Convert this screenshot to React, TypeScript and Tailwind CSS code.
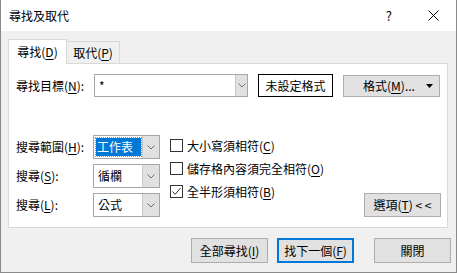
import React from 'react';

const font = "font-['Noto_Sans_CJK_TC','Microsoft_JhengHei',sans-serif]";

function Chevron() {
  return (
    <svg width="8" height="5" viewBox="0 0 8 5" className="block">
      <path d="M0.5 0.5 L4 4 L7.5 0.5" fill="none" stroke="#6d6d6d" strokeWidth="1" />
    </svg>
  );
}

function U({ children }: { children: React.ReactNode }) {
  return <span className="underline underline-offset-[2px] decoration-[1px]">{children}</span>;
}

function Combo({ children }: { children: React.ReactNode }) {
  return (
    <div className="flex w-[67px] h-[24px] border border-[#a6a6a6] bg-white">
      <div className="flex-1 flex items-center pl-[2px]">{children}</div>
      <div className="w-[17px] flex items-center justify-center bg-[#e1e1e1] border-l border-[#c8c8c8]">
        <Chevron />
      </div>
    </div>
  );
}

function Check({ checked, children }: { checked?: boolean; children: React.ReactNode }) {
  return (
    <div className="flex items-center h-[13px]">
      <div className="w-[13px] h-[13px] border border-[#333333] bg-white flex items-center justify-center">
        {checked && (
          <svg width="11" height="11" viewBox="0 0 11 11">
            <path d="M1.5 5.5 L4.2 8.3 L9.5 2" fill="none" stroke="#333333" strokeWidth="1" />
          </svg>
        )}
      </div>
      <span className="ml-[4px] leading-none">{children}</span>
    </div>
  );
}

function Button({ children, primary }: { children: React.ReactNode; primary?: boolean }) {
  return (
    <div
      className={
        'w-[77px] h-[25px] flex items-center justify-center bg-[#e1e1e1] ' +
        (primary ? 'border-2 border-[#0078d7]' : 'border border-[#adadad]')
      }
    >
      {children}
    </div>
  );
}

export default function App() {
  return (
    <div
      className={`${font} text-[12px] text-black w-[457px] h-[273px] bg-[#f0f0f0] border-x border-b border-[#8a8a8a] flex flex-col`}
    >
      {/* title bar */}
      <div className="h-[31px] bg-white flex items-center pl-[8px]">
        <span className="text-[12px]">尋找及取代</span>
        <span className="ml-auto text-[13px] mr-[36px]">?</span>
        <svg width="11" height="11" viewBox="0 0 11 11" className="mr-[17px]">
          <path d="M0.5 0.5 L10.5 10.5 M10.5 0.5 L0.5 10.5" stroke="#000" strokeWidth="1" />
        </svg>
      </div>

      <div className="flex-1 flex flex-col pl-[7px] pt-[8px]">
        {/* tabs */}
        <div className="flex items-end h-[24px]">
          <div className="relative z-10 w-[59px] h-[25px] -mb-px bg-white border-t border-x border-[#d9d9d9] flex items-center justify-center pb-[1px]">
            尋找(<U>D</U>)
          </div>
          <div className="w-[53px] h-[22px] bg-[#f0f0f0] border-t border-r border-[#d9d9d9] flex items-center justify-center">
            取代(<U>P</U>)
          </div>
        </div>

        {/* panel */}
        <div className="w-[440px] h-[165px] bg-white border border-[#d9d9d9] pl-[7px] pt-[10px] flex flex-col">
          <div className="flex items-center h-[23px]">
            <span className="w-[78px]">
              尋找目標(<U>N</U>):
            </span>
            <div className="flex w-[154px] h-[23px] border border-[#a6a6a6]">
              <div className="flex-1 flex items-center pl-[4px]">*</div>
              <div className="w-[12px] flex items-center justify-center bg-[#e1e1e1] border-l border-[#c8c8c8]">
                <Chevron />
              </div>
            </div>
            <div className="ml-[10px] w-[75px] h-[23px] border border-black flex items-center justify-center">
              未設定格式
            </div>
            <div className="ml-[10px] w-[97px] h-[22px] bg-[#e1e1e1] border border-[#adadad] flex items-center">
              <span className="flex-1 text-center pl-[8px]">
                格式(<U>M</U>)...
              </span>
              <svg width="7" height="4" viewBox="0 0 7 4" className="mr-[6px]">
                <path d="M0 0 L7 0 L3.5 4 Z" fill="#000" />
              </svg>
            </div>
          </div>

          <div className="flex mt-[38px]">
            <div className="flex flex-col gap-[5px]">
              <div className="flex items-center">
                <span className="w-[77px]">
                  搜尋範圍(<U>H</U>):
                </span>
                <Combo>
                  <span className="bg-[#0078d7] text-white outline-1 outline-dotted outline-[#d08a30] px-[1px] leading-[18px] w-[45px]">
                    工作表
                  </span>
                </Combo>
              </div>
              <div className="flex items-center">
                <span className="w-[77px]">
                  搜尋(<U>S</U>):
                </span>
                <Combo>
                  <span className="pl-[2px]">循欄</span>
                </Combo>
              </div>
              <div className="flex items-center">
                <span className="w-[77px]">
                  搜尋(<U>L</U>):
                </span>
                <Combo>
                  <span className="pl-[2px]">公式</span>
                </Combo>
              </div>
            </div>

            <div className="ml-[10px] mt-[4px] flex flex-col gap-[10px]">
              <Check>
                大小寫須相符(<U>C</U>)
              </Check>
              <Check>
                儲存格內容須完全相符(<U>O</U>)
              </Check>
              <Check checked>
                全半形須相符(<U>B</U>)
              </Check>
            </div>

            <div className="flex-1 flex items-end justify-end pr-[6px]">
              <div className="w-[77px] h-[24px] bg-[#e1e1e1] border border-[#adadad] flex items-center justify-center">
                選項(<U>T</U>)&nbsp;&lt; &lt;
              </div>
            </div>
          </div>
        </div>

        {/* buttons */}
        <div className="flex justify-end pr-[5px] mt-[10px]">
          <Button>
            全部尋找(<U>I</U>)
          </Button>
          <div className="ml-[9px]">
            <Button primary>
              找下一個(<U>F</U>)
            </Button>
          </div>
          <div className="ml-[20px]">
            <Button>關閉</Button>
          </div>
        </div>
      </div>
    </div>
  );
}
